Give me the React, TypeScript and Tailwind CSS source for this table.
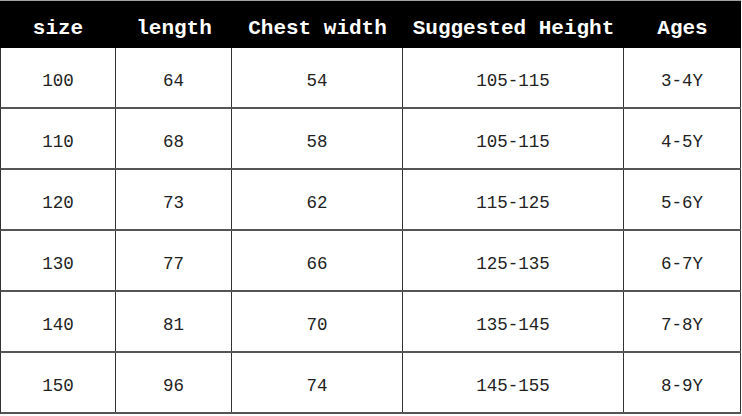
import React from 'react';

const headers = ['size', 'length', 'Chest width', 'Suggested Height', 'Ages'];

const rows = [
  ['100', '64', '54', '105-115', '3-4Y'],
  ['110', '68', '58', '105-115', '4-5Y'],
  ['120', '73', '62', '115-125', '5-6Y'],
  ['130', '77', '66', '125-135', '6-7Y'],
  ['140', '81', '70', '135-145', '7-8Y'],
  ['150', '96', '74', '145-155', '8-9Y'],
];

const widths = ['w-[116px]', 'w-[116px]', 'w-[171px]', 'w-[221px]', 'w-[117px]'];

export default function App() {
  return (
    <div className="w-[742px] h-[416px] bg-white overflow-hidden" style={{ fontFamily: '"Liberation Mono", "DejaVu Sans Mono", monospace' }}>
      <div className="w-[741px] border-t border-[#a0a0a0]">
        <div className="flex h-[47px] bg-black text-white">
          {headers.map((h, i) => (
            <div key={h} className={`${widths[i]} flex items-center justify-center text-[21px] font-bold pt-[8px]`}>
              {h}
            </div>
          ))}
        </div>
        {rows.map((r, ri) => (
          <div key={ri} className="flex h-[61px] border-b-2 border-[#555] border-l border-l-[#333]">
            {r.map((c, ci) => (
              <div
                key={ci}
                className={`${ci === 0 ? 'w-[115px]' : widths[ci]} flex items-center justify-center text-[17.5px] text-[#222] border-r border-[#333] pt-[7px]`}
              >
                {c}
              </div>
            ))}
          </div>
        ))}
      </div>
    </div>
  );
}
